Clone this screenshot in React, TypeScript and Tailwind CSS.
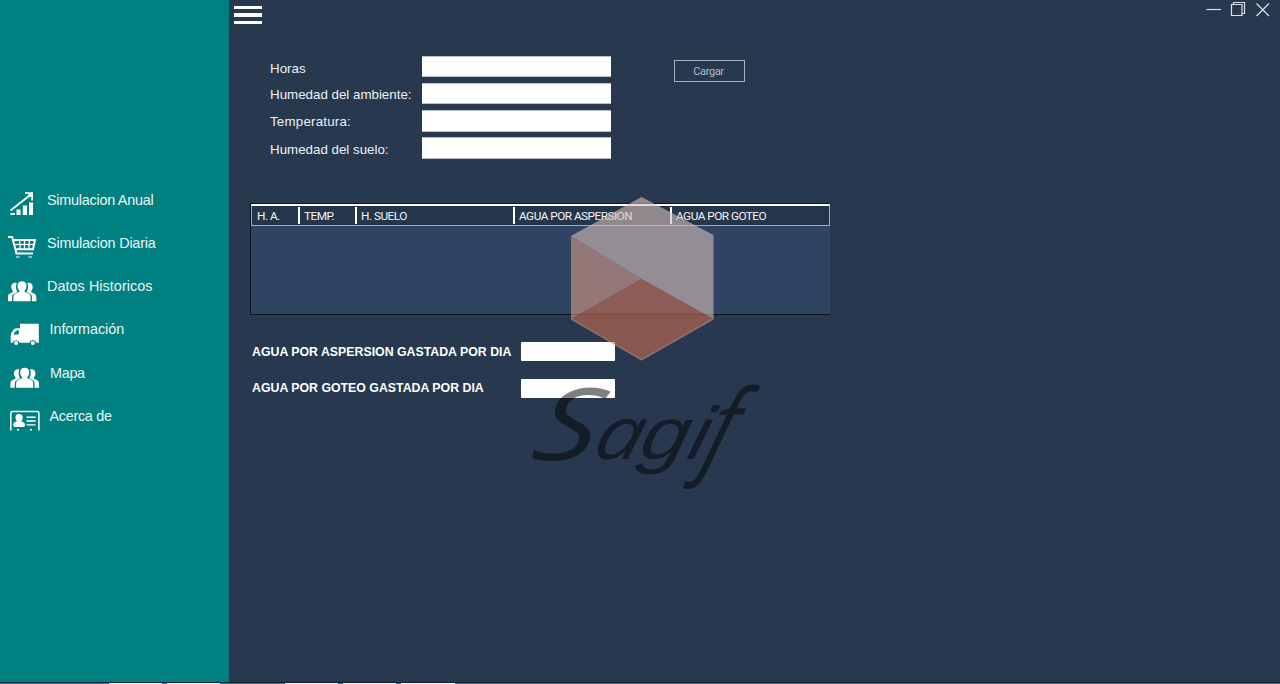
import type { ReactNode } from 'react';

function ChartIcon() {
  return (
    <g fill="white">
      <path d="M10.500 20.500 30.500 4.800" fill="none" stroke="white" strokeWidth="1.900" />
      <path d="M25 2.200H33v8.300l-1.700-.1V6.200L29.500 7.500 27.500 5.800l1.800-1.900-4.300-.1z" />
      <path d="M10.500 23H15v2h-4.500zM16.500 19.500h4v5.500h-4zM22.800 15.500h4.200v9.500h-4.200zM29 12.500h4v12.500h-4z" />
    </g>
  );
}

function CartIcon() {
  return (
    <g fill="none" stroke="white">
      <path d="M8 4h4.200l4.300 16.500H33" strokeWidth="2" />
      <path d="M12.800 7H35L33 16.200H15.500" strokeWidth="2" />
      <path d="M14.500 11.500h19.500" strokeWidth="1.200" />
      <path d="M19.500 7l.8 9.500M24.500 7v9.500M29.500 7l-.8 9.500" strokeWidth="1.300" />
      <path d="M16 24h3.500M28.500 24H32" strokeWidth="1.200" />
    </g>
  );
}

function PeopleIcon({ dx = 0, dy = 0 }: { dx?: number; dy?: number }) {
  return (
    <g fill="white" transform={`translate(${dx} ${dy})`}>
      <path d="M22 4.300c3 0 4.700 1.800 4.500 4.900-.1 2-.9 3.500-1.800 4.400v1.400c2 .7 5 1.500 5.500 3.300.5 1.500.4 4.200.4 6H13.400c0-1.800-.1-4.500.4-6 .5-1.800 3.500-2.600 5.500-3.300v-1.400c-.9-.9-1.700-2.400-1.800-4.400-.2-3.100 1.500-4.900 4.500-4.900z" />
      <path d="M16.800 6c-3-1-5.800.6-5.500 4 .1 1.700.6 3 1.400 3.800v1.500c-1.700.7-4 1.300-4.600 3-.5 1.500-.5 4.500-.5 6h4.500c0-2.500-.3-5 .7-6.500 1-1.400 3-2.100 4.700-2.900-1.700-2.500-2.200-6.400-.7-8.900z" />
      <path d="M27.200 6c3-1 5.800.6 5.500 4-.1 1.700-.6 3-1.400 3.800v1.500c1.700.7 4 1.300 4.600 3 .5 1.500.5 4.500.5 6h-4.500c0-2.500.3-5-.7-6.500-1-1.400-3-2.100-4.700-2.900 1.700-2.500 2.200-6.400.7-8.900z" />
    </g>
  );
}

function TruckIcon() {
  return (
    <g>
      <path
        fill="white"
        fillRule="evenodd"
        d="M20 3.700h18.800v19h-2.300a3.800 3.800 0 0 0-7.200 0H19.700a3.600 3.600 0 0 0-6.900 0H10.700V16q.2-3.500 3-6.500 1.500-1.300 3.500-1.300H20zM18.800 10.200h-1.500q-3 1.200-3.900 4.300h5.400z"
      />
      <circle cx="16.200" cy="23" r="2" fill="white" />
      <circle cx="32.800" cy="23" r="2.100" fill="white" />
    </g>
  );
}

function CardIcon() {
  return (
    <g fill="white">
      <path d="M10.800 24.500V7q0-1.600 1.600-1.600h24.900q1.600 0 1.600 1.600v17.500" fill="none" stroke="white" strokeWidth="1.500" />
      <path d="M19 8c2.600 0 3.900 1.500 3.700 3.900-.1 1.400-.7 2.400-1.400 3.100v.5c1.700.4 3.500 1 3.700 2.900 0 1-.5 2.500-1.500 2.500H14.700c-1 0-1.500-1.500-1.500-2.500.2-1.900 2-2.500 3.700-2.900V15c-.7-.7-1.300-1.700-1.400-3.100C15.300 9.500 16.400 8 19 8z" />
      <path d="M26.500 10.500h9v1.400h-9zM26.500 14.300h9v1.400h-9zM26.500 18.200h9v1.400h-9zM17 23h2v1.500h-2zM30 23h2v1.500h-2z" />
    </g>
  );
}

const menu: { label: string; icon: ReactNode; pad: string }[] = [
  { label: 'Simulacion Anual', icon: <ChartIcon />, pad: 'pl-[7px] tracking-[-0.250px]' },
  { label: 'Simulacion Diaria', icon: <CartIcon />, pad: 'pl-[7px] tracking-[-0.200px]' },
  { label: 'Datos Historicos', icon: <PeopleIcon />, pad: 'pl-[7px] tracking-[0.050px]' },
  { label: 'Información', icon: <TruckIcon />, pad: 'pl-[9.500px] tracking-[-0.050px]' },
  { label: 'Mapa', icon: <PeopleIcon dx={2.7} dy={0.5} />, pad: 'pl-[10px] tracking-[-0.300px]' },
  { label: 'Acerca de', icon: <CardIcon />, pad: 'pl-[9.500px] tracking-[-0.300px]' },
];

const fields = [
  { label: 'Horas', pad: 'pt-[5px]' },
  { label: 'Humedad del ambiente:', pad: 'pt-[4px]' },
  { label: 'Temperatura:', pad: 'pt-[4px] tracking-[0.200px]' },
  { label: 'Humedad del suelo:', pad: 'pt-[4.500px]' },
];

const columns = [
  { label: 'H. A.', cls: 'w-[46px] pl-[5px]' },
  { label: 'TEMP.', cls: 'w-[57px] pl-[4px] border-l-2' },
  { label: 'H. SUELO', cls: 'w-[158px] pl-[4px] border-l-2' },
  { label: 'AGUA POR ASPERSION', cls: 'w-[157px] pl-[4px] border-l-2' },
  { label: 'AGUA POR GOTEO', cls: 'flex-1 pl-[4px] border-l-2' },
];

const strip = [
  ['w-[109px]', 'bg-[#44698b]'],
  ['w-[53px]', 'bg-[#f1f4f6]'],
  ['w-[5px]', 'bg-[#44698b]'],
  ['w-[53px]', 'bg-[#f1f4f6]'],
  ['w-[65px]', 'bg-[#44698b]'],
  ['w-[53px]', 'bg-[#f1f4f6]'],
  ['w-[5px]', 'bg-[#44698b]'],
  ['w-[53px]', 'bg-[#f1f4f6]'],
  ['w-[5px]', 'bg-[#44698b]'],
  ['w-[54px]', 'bg-[#f1f4f6]'],
  ['flex-1', 'bg-[#44698b]'],
];

function Logo() {
  return (
    <svg className="pointer-events-none absolute left-[520px] top-[190px]" width="250" height="310" viewBox="520 190 250 310">
      <g fillOpacity="0.6">
        <path d="M571 236 641.500 197 713.500 235V319L641.500 279z" fill="rgb(215,191,185)" />
        <path d="M571 236 641.500 279 571 319z" fill="rgb(217,155,137)" />
        <path d="M571 319 641.500 279 713.500 319 641.500 360z" fill="rgb(205,108,78)" />
      </g>
      <path d="M571 319 641.500 360 713.500 319" fill="none" stroke="#b5a9ab" strokeOpacity="0.4" strokeWidth="1.500" />
      <g className="font-['Open_Sans','Noto_Sans',sans-serif] italic" fill="black" fillOpacity="0.5">
        <text transform="translate(529 460) skewX(-14) scale(1.25 1)" fontSize="100">S</text>
        <text transform="translate(591 459) skewX(-14) scale(1.15 1)" fontSize="74">
          <tspan x="0">a</tspan>
          <tspan x="40" className="font-['Liberation_Sans',sans-serif]">g</tspan>
          <tspan x="81">i</tspan>
        </text>
        <text transform="translate(700 464) skewX(-17) scale(0.8 1)" fontSize="104">f</text>
      </g>
    </svg>
  );
}

export default function App() {
  return (
    <div className="relative flex h-[684px] w-[1280px] flex-col overflow-hidden bg-[#27384f] font-['Liberation_Sans',sans-serif] text-white">
      <div className="flex h-[682px]">
        <aside className="w-[229px] bg-[#008080] pt-[186px]">
          <nav>
            {menu.map((m) => (
              <a key={m.label} className="flex h-[43.250px] items-start">
                <svg className="ml-2 mt-1 shrink-0" width="32" height="30" viewBox="8 0 32 30">
                  {m.icon}
                </svg>
                <span className={`${m.pad} pt-[5.500px] text-[14.400px] leading-4 text-[#e9f6f5]`}>{m.label}</span>
              </a>
            ))}
          </nav>
        </aside>

        <main className="flex flex-1 flex-col">
          <header className="flex h-[55px] items-start justify-between pl-[5px] pr-[9px]">
            <button className="mt-[6px] flex w-[28px] flex-col gap-[4px]" aria-label="Menu">
              <span className="h-[3px] w-full bg-white" />
              <span className="h-[4px] w-full bg-white" />
              <span className="h-[3px] w-full bg-white" />
            </button>
            <svg width="66" height="20" viewBox="1205 0 66 20" fill="none" stroke="#dce0e6" strokeWidth="1.200">
              <path d="M1206.500 9.500H1221" />
              <path d="M1231.500 4.500h10.500v11h-10.500zM1233.500 4V2.500h11V13.500h-2" />
              <path d="M1256.500 3.500l12.500 12.500M1269 3.500l-12.500 12.500" />
            </svg>
          </header>

          <section className="flex h-[149px] items-start pl-[41px] pt-[0.500px]">
            <div>
              {fields.map((f) => (
                <label key={f.label} className="flex h-[27.300px] items-start">
                  <span className={`${f.pad} w-[152px] whitespace-nowrap text-[13.330px] leading-4 text-[#eef1f5]`}>{f.label}</span>
                  <input className="h-[21.500px] w-[189px] rounded-[1px] border border-x-white border-y-[#b6c0cc] bg-white outline-none" />
                </label>
              ))}
            </div>
            <button className="ml-[63px] mt-[4.500px] h-[22px] w-[71px] border border-[#a9b3c0] pr-[2px] pt-px font-['Roboto',sans-serif] text-[11px] leading-4 tracking-[-0.400px] text-[#b4bcc8]">
              Cargar
            </button>
          </section>

          <section className="-mt-px ml-[21px] h-[112px] w-[580px] border-y border-l border-[#0b131d] bg-[#2f4462]">
            <div className="flex h-[22px] items-start border-b border-l border-r border-t-2 border-[#a3abb5] border-t-white bg-[#25364a]">
              {columns.map((c) => (
                <div
                  key={c.label}
                  className={`${c.cls} mt-px h-[17px] whitespace-nowrap border-white font-['Roboto',sans-serif] text-[11.800px] leading-[18px] tracking-[-0.520px] text-[#f2f4f7]`}
                >
                  {c.label}
                </div>
              ))}
            </div>
          </section>

          <section className="flex flex-col gap-[18px] pl-[23px] pt-[27px] text-[12.330px] font-bold">
            <label className="flex h-[19px] items-center">
              <span className="w-[269px] whitespace-nowrap pt-px">AGUA POR ASPERSION GASTADA POR DIA</span>
              <input className="h-[19px] w-[94px] rounded-[1px] bg-white outline-none" />
            </label>
            <label className="flex h-[19px] items-center">
              <span className="w-[269px] whitespace-nowrap pb-px">AGUA POR GOTEO GASTADA POR DIA</span>
              <input className="h-[19px] w-[94px] rounded-[1px] bg-white outline-none" />
            </label>
          </section>
        </main>
      </div>

      <div className="h-px bg-[#12202f]" />
      <div className="flex h-px">
        {strip.map(([w, bg], i) => (
          <span key={i} className={`${w} ${bg}`} />
        ))}
      </div>

      <Logo />
    </div>
  );
}
